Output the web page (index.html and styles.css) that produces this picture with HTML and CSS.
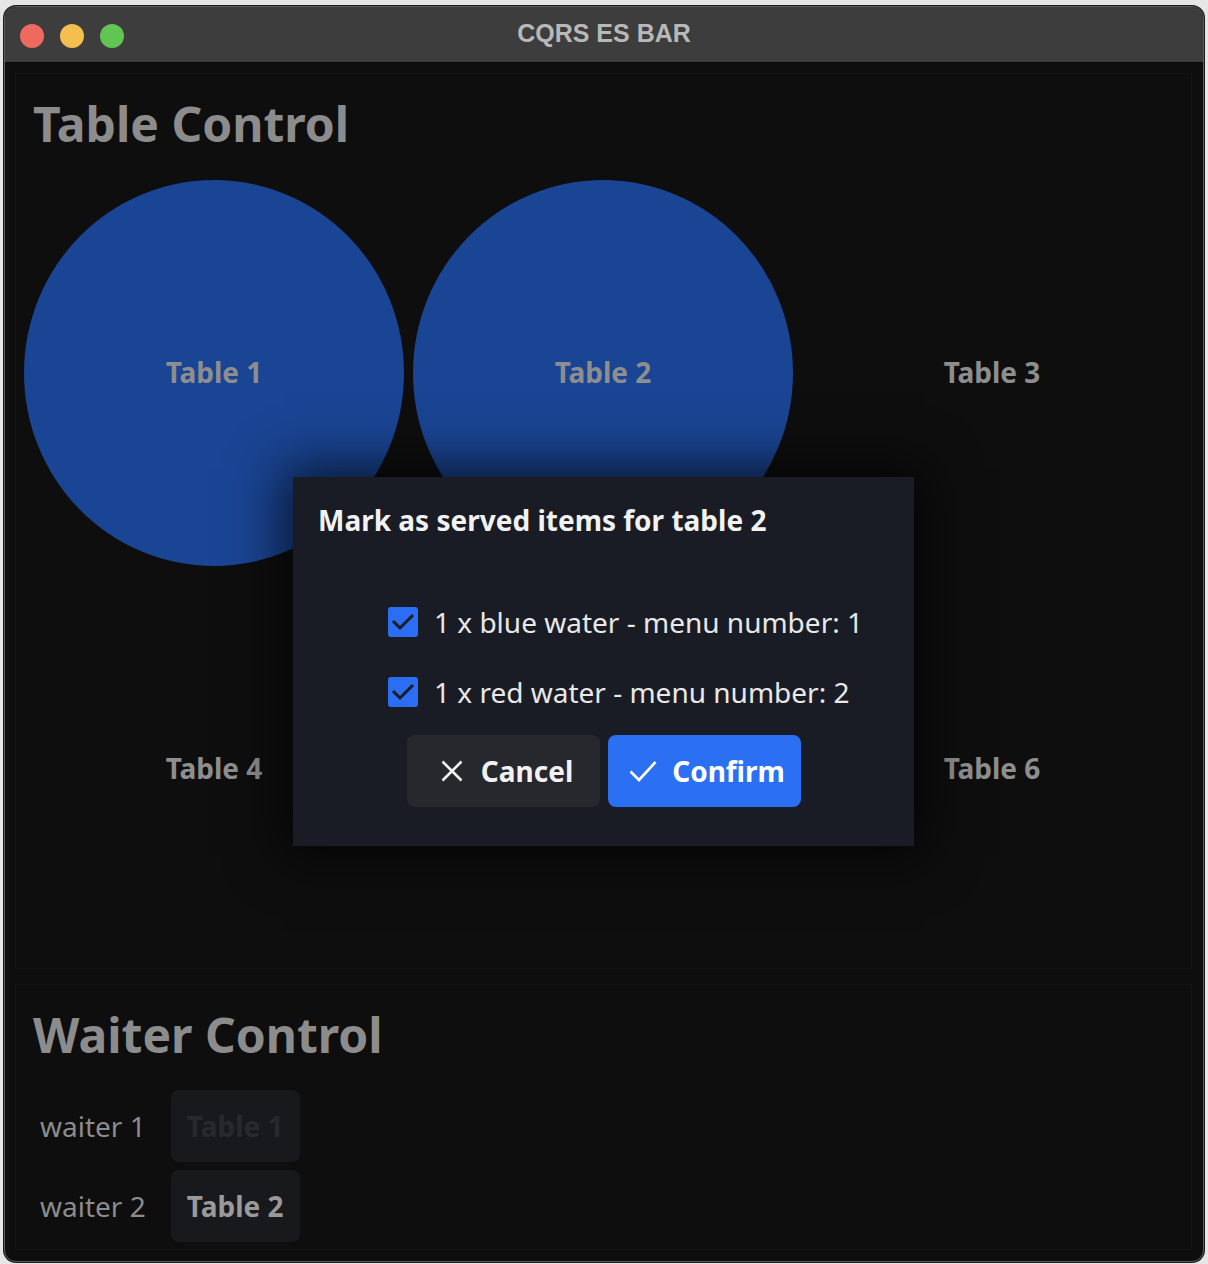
FILE: index.html
```html
<!DOCTYPE html>
<html>
<head>
<meta charset="utf-8">
<link rel="stylesheet" href="styles.css">
</head>
<body>
<div class="window">
  <div class="titlebar">
    <div class="lights">
      <span class="light red"></span>
      <span class="light yellow"></span>
      <span class="light green"></span>
    </div>
    <div class="wtitle">CQRS ES BAR</div>
    <div></div>
  </div>
  <div class="content">
    <section class="panel tables">
      <h1 class="ptitle">Table Control</h1>
      <div class="grid">
        <div class="table occupied"><span>Table 1</span></div>
        <div class="table occupied"><span>Table 2</span></div>
        <div class="table"><span>Table 3</span></div>
        <div class="table"><span>Table 4</span></div>
        <div class="table"><span>Table 5</span></div>
        <div class="table"><span>Table 6</span></div>
      </div>
    </section>
    <section class="panel waiters">
      <h1 class="ptitle">Waiter Control</h1>
      <div class="wlist">
        <div class="wrow"><span class="wname">waiter 1</span><button class="wbtn disabled">Table 1</button></div>
        <div class="wrow"><span class="wname">waiter 2</span><button class="wbtn">Table 2</button></div>
      </div>
    </section>
  </div>
  <div class="modal">
    <h2 class="mtitle">Mark as served items for table 2</h2>
    <ul class="items">
      <li class="item">
        <span class="check"><svg viewBox="0 0 30 30" width="30" height="30"><polyline points="6,15 12,21 24,9" fill="none" stroke="#1b1d25" stroke-width="3" stroke-linecap="square"/></svg></span>
        <span>1 x blue water - menu number: 1</span>
      </li>
      <li class="item">
        <span class="check"><svg viewBox="0 0 30 30" width="30" height="30"><polyline points="6,15 12,21 24,9" fill="none" stroke="#1b1d25" stroke-width="3" stroke-linecap="square"/></svg></span>
        <span>1 x red water - menu number: 2</span>
      </li>
    </ul>
    <div class="actions">
      <button class="btn cancel">
        <svg viewBox="0 0 22 22" width="22" height="22"><path d="M1.5 1.5 L20.5 20.5 M20.5 1.5 L1.5 20.5" stroke="#f2f2f2" stroke-width="2.6" fill="none"/></svg>
        <span>Cancel</span>
      </button>
      <button class="btn confirm">
        <svg viewBox="0 0 28 22" width="28" height="22"><polyline points="1.5,11.5 10,20 26.5,2" fill="none" stroke="#ffffff" stroke-width="2.6"/></svg>
        <span>Confirm</span>
      </button>
    </div>
  </div>
</div>
</body>
</html>
```

FILE: styles.css
```css
* { box-sizing: border-box; }

html, body {
  margin: 0;
  padding: 0;
  background: #e6e6e6;
  font-family: "Noto Sans", "Open Sans", sans-serif;
}

body {
  padding: 6px 4px 0 4px;
  height: 1264px;
  overflow: hidden;
}

.window {
  position: relative;
  width: 1200px;
  background: #0e0e0e;
  border: 1px solid #5c5c5c;
  border-radius: 12px;
  overflow: hidden;
  box-shadow: 0 0 0 1px #1a1a1a;
}

.titlebar {
  height: 56px;
  background: #3d3d3d;
  border-bottom: 1px solid #0a0a0a;
  display: grid;
  grid-template-columns: 1fr auto 1fr;
  align-items: center;
  padding: 0 15px;
}

.lights {
  display: flex;
  gap: 16px;
  align-items: center;
  margin-top: 2px;
}

.light {
  width: 24px;
  height: 24px;
  border-radius: 50%;
  display: block;
}
.light.red { background: #ee6a5f; }
.light.yellow { background: #f5bf4f; }
.light.green { background: #61c554; }

.wtitle {
  font-family: "Liberation Sans", Arial, sans-serif;
  font-weight: 700;
  font-size: 25px;
  line-height: 30px;
  color: #b8b8b8;
  margin-bottom: 4px;
}

.content {
  padding: 10px 11px 11px 10px;
  display: flex;
  flex-direction: column;
  gap: 15px;
}

.panel {
  background: #0e0e0e;
  border: 1px solid #141414;
  padding: 17px 8px 6px 8px;
}

.ptitle {
  margin: 0 0 24px 9px;
  font-size: 48px;
  line-height: 65px;
  font-weight: 700;
  color: #8c8c8c;
}

.grid {
  display: grid;
  grid-template-columns: repeat(3, 380px);
  grid-template-rows: repeat(2, 386px);
  column-gap: 9px;
  row-gap: 10px;
}

.table {
  border-radius: 50%;
  display: flex;
  align-items: center;
  justify-content: center;
  font-size: 28px;
  font-weight: 700;
  color: #8e8e8e;
  padding-bottom: 2px;
}
.table.occupied { background: #1a4594; }

.waiters {
  padding: 17px 8px 7px 8px;
}
.waiters .ptitle { margin-bottom: 23px; }

.wlist {
  display: flex;
  flex-direction: column;
  gap: 8px;
  padding-left: 16px;
}

.wrow {
  display: flex;
  align-items: center;
  gap: 25px;
}

.wname {
  font-size: 28px;
  color: #8c8c8c;
}

.wbtn {
  height: 72px;
  width: 129px;
  border: none;
  border-radius: 8px;
  background: #18191d;
  font-family: "Noto Sans", sans-serif;
  font-size: 28px;
  font-weight: 700;
  color: #9a9a9a;
  padding: 0;
}
.wbtn.disabled { color: #28292d; }

.modal {
  position: absolute;
  left: 288px;
  top: 470px;
  width: 621px;
  height: 369px;
  background: #191c24;
  box-shadow: 0 0 50px 10px rgba(0, 0, 0, 0.7);
  padding: 24px 25px 39px 25px;
  display: flex;
  flex-direction: column;
}

.mtitle {
  margin: 0;
  font-size: 28px;
  line-height: 38px;
  font-weight: 700;
  color: #f2f2f2;
}

.items {
  list-style: none;
  margin: 63px 0 0 0;
  padding: 0 0 0 70px;
  display: flex;
  flex-direction: column;
  gap: 30px;
}

.item {
  height: 40px;
  display: flex;
  align-items: center;
  gap: 16px;
  font-size: 28px;
  color: #e8e8e8;
}

.check {
  width: 30px;
  height: 30px;
  background: #2b6ef3;
  border-radius: 3px;
  display: block;
}
.check svg { display: block; }

.actions {
  margin-top: 23px;
  display: flex;
  justify-content: center;
  gap: 8px;
}

.btn {
  width: 193px;
  height: 72px;
  border: none;
  border-radius: 8px;
  display: flex;
  align-items: center;
  justify-content: center;
  gap: 18px;
  font-family: "Noto Sans", sans-serif;
  font-size: 28px;
  font-weight: 700;
  color: #f2f2f2;
  padding: 0 0 0 8px;
}
.btn svg { display: block; }
.btn.cancel { background: #27282d; }
.btn.confirm { background: #2b6ff3; color: #ffffff; gap: 15px; padding-left: 6px; }
```
